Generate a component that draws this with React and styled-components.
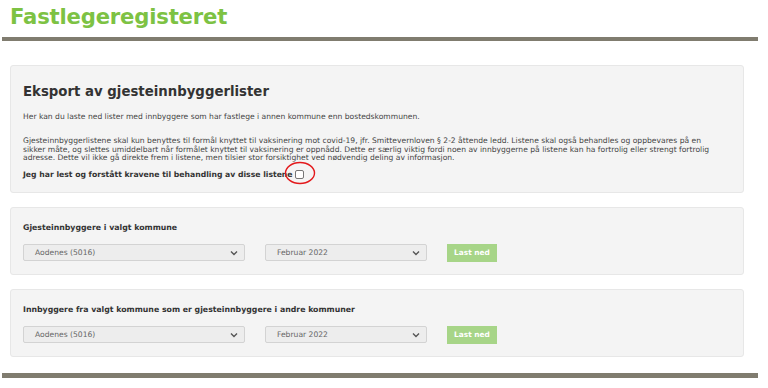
import React from "react";
import styled, { createGlobalStyle } from "styled-components";

const Global = createGlobalStyle`
  html, body {
    margin: 0;
    padding: 0;
    background: #ffffff;
  }
  body {
    font-family: "DejaVu Sans", Verdana, sans-serif;
    color: #333333;
  }
`;

const Page = styled.div`
  width: 768px;
  padding: 0 0 0 2px;
  box-sizing: border-box;
`;

const Header = styled.header`
  padding: 4px 0 0 8px;
  height: 37px;
  box-sizing: border-box;
`;

const Brand = styled.h1`
  margin: 0;
  font-size: 21.2px;
  line-height: 26px;
  font-weight: 700;
  color: #7dc243;
  letter-spacing: -0.2px;
`;

const Rule = styled.div`
  width: 756px;
  height: ${(p) => p.$h || 4}px;
  background: #807c6f;
`;

const Main = styled.main`
  display: flex;
  flex-direction: column;
  gap: 14px;
  padding: 24px 0 16px 8px;
  width: 742px;
  box-sizing: border-box;
`;

const Panel = styled.section`
  background: #f4f4f4;
  border: 1px solid #e7e7e7;
  border-radius: 3px;
  padding: ${(p) => p.$pad || "13px 12px"};
  display: flex;
  flex-direction: column;
`;

const Heading = styled.h2`
  margin: 0 0 13px;
  font-size: 13.3px;
  line-height: 16px;
  font-weight: 700;
  color: #333333;
`;

const Text = styled.p`
  margin: 0 0 ${(p) => p.$mb || 0}px;
  font-size: 7.6px;
  line-height: 8.4px;
  color: #444444;
  max-width: 700px;
`;

const ConsentRow = styled.label`
  position: relative;
  display: flex;
  align-items: center;
  gap: 1px;
  margin-top: 7px;
  font-size: 7.7px;
  line-height: 9px;
  font-weight: 700;
  color: #333333;
`;

const Box = styled.span`
  position: relative;
  width: 7px;
  height: 7px;
  border: 1px solid #767676;
  border-radius: 2px;
  background: #ffffff;
  margin-left: 1px;
`;

const Ring = styled.svg`
  position: absolute;
  left: -12px;
  top: -10px;
  pointer-events: none;
`;

const SectionTitle = styled.h3`
  margin: 0 0 11px;
  font-size: 7.8px;
  line-height: 10px;
  font-weight: 700;
  color: #333333;
`;

const Controls = styled.div`
  display: flex;
  align-items: center;
`;

const Select = styled.div`
  width: ${(p) => p.$w}px;
  height: 17px;
  box-sizing: border-box;
  margin-right: ${(p) => p.$mr}px;
  border: 1px solid #d3d3d3;
  border-radius: 2px;
  background: #ededed;
  display: flex;
  align-items: center;
  justify-content: space-between;
  padding: 0 6px 0 11px;
  font-size: 7.6px;
  color: #666666;
`;

const Button = styled.button`
  width: 50px;
  height: 18px;
  border: none;
  border-radius: 0;
  background: #a7d588;
  color: #ffffff;
  font-family: "DejaVu Sans", Verdana, sans-serif;
  font-size: 7.4px;
  font-weight: 700;
  padding: 0;
`;

const Chevron = () => (
  <svg width="8" height="6" viewBox="0 0 8 6">
    <path d="M1 1.5 L4 4.5 L7 1.5" fill="none" stroke="#555" strokeWidth="1.4" />
  </svg>
);

function Picker({ kommune, month }) {
  return (
    <Controls>
      <Select $w={222} $mr={20}>
        <span>{kommune}</span>
        <Chevron />
      </Select>
      <Select $w={162} $mr={20}>
        <span>{month}</span>
        <Chevron />
      </Select>
      <Button type="button">Last ned</Button>
    </Controls>
  );
}

export default function App() {
  return (
    <Page>
      <Global />
      <Header>
        <Brand>Fastlegeregisteret</Brand>
      </Header>
      <Rule />
      <Main>
        <Panel $pad="18px 12px 13px">
          <Heading>Eksport av gjesteinnbyggerlister</Heading>
          <Text $mb={16}>
            Her kan du laste ned lister med innbyggere som har fastlege i annen kommune enn bostedskommunen.
          </Text>
          <Text>
            Gjesteinnbyggerlistene skal kun benyttes til formål knyttet til vaksinering mot covid-19, jfr.
            Smittevernloven § 2-2 åttende ledd. Listene skal også behandles og oppbevares på en sikker måte,
            og slettes umiddelbart når formålet knyttet til vaksinering er oppnådd. Dette er særlig viktig fordi
            noen av innbyggerne på listene kan ha fortrolig eller strengt fortrolig adresse. Dette vil ikke gå
            direkte frem i listene, men tilsier stor forsiktighet ved nødvendig deling av informasjon.
          </Text>
          <ConsentRow>
            Jeg har lest og forstått kravene til behandling av disse listene
            <Box>
              <Ring width="32" height="24" viewBox="0 0 32 24">
                <ellipse cx="16" cy="12" rx="14.5" ry="10.5" fill="none" stroke="#e3191c" strokeWidth="1.4" />
              </Ring>
            </Box>
          </ConsentRow>
        </Panel>
        <Panel $pad="15px 12px 12px">
          <SectionTitle>Gjesteinnbyggere i valgt kommune</SectionTitle>
          <Picker kommune="Aodenes (5016)" month="Februar 2022" />
        </Panel>
        <Panel $pad="15px 12px 12px">
          <SectionTitle>Innbyggere fra valgt kommune som er gjesteinnbyggere i andre kommuner</SectionTitle>
          <Picker kommune="Aodenes (5016)" month="Februar 2022" />
        </Panel>
      </Main>
      <Rule $h={5} />
    </Page>
  );
}
